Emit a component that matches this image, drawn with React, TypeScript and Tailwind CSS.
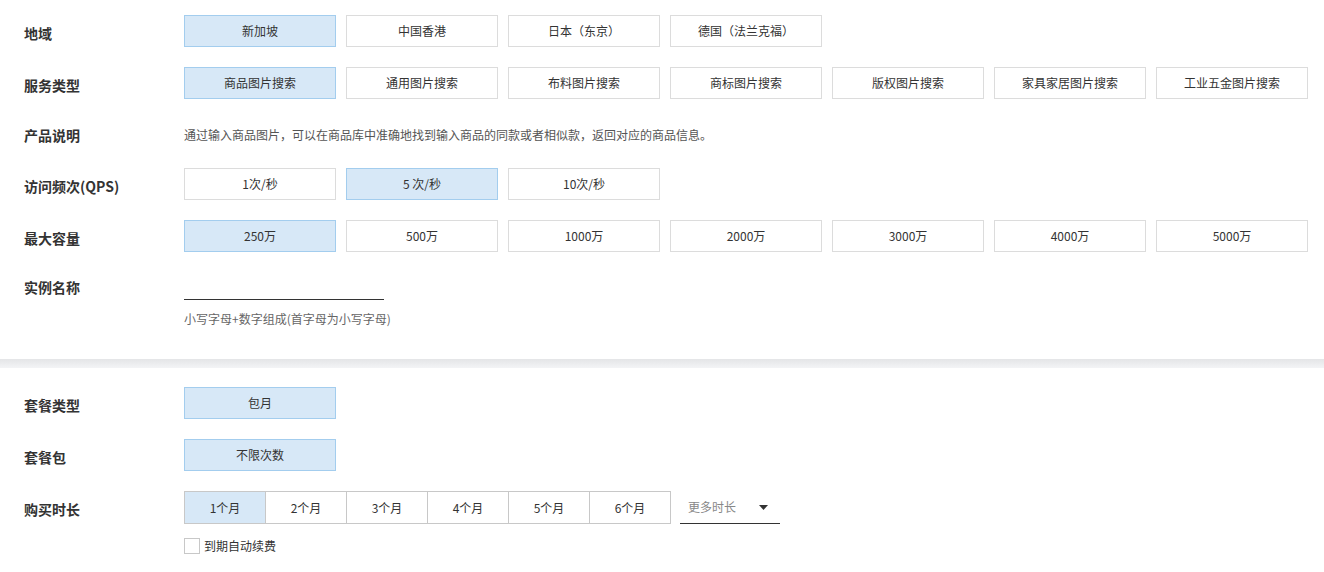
import { useState } from "react";

const font = { fontFamily: '"Noto Sans CJK SC", "Noto Sans", sans-serif' };

const Option = ({ label, active, onClick }: { label: string; active?: boolean; onClick?: () => void }) => (
  <button
    onClick={onClick}
    className={
      "w-[152px] h-8 border text-xs text-[#333] flex items-center justify-center cursor-pointer " +
      (active ? "bg-[#d7e8f7] border-[#a3cdee]" : "bg-white border-[#dcdcdc]")
    }
  >
    {label}
  </button>
);

const Row = ({ label, children, className = "" }: { label: string; children: React.ReactNode; className?: string }) => (
  <div className={"flex " + className}>
    <div className="w-[184px] pl-6 shrink-0 text-sm font-bold text-[#333] h-8 leading-8 pt-[2px]">{label}</div>
    <div className="flex-1">{children}</div>
  </div>
);

const Choice = ({ items, initial }: { items: string[]; initial: number }) => {
  const [sel, setSel] = useState(initial);
  return (
    <div className="flex gap-[10px]">
      {items.map((it, i) => (
        <Option key={it} label={it} active={sel === i} onClick={() => setSel(i)} />
      ))}
    </div>
  );
};

export default function App() {
  const [month, setMonth] = useState(0);
  const [renew, setRenew] = useState(false);
  const months = ["1个月", "2个月", "3个月", "4个月", "5个月", "6个月"];

  return (
    <div className="w-[1324px] bg-white" style={font}>
      {/* spec section */}
      <div className="pt-[15px] pb-[32px] flex flex-col gap-5">
        <Row label="地域">
          <Choice items={["新加坡", "中国香港", "日本（东京）", "德国（法兰克福）"]} initial={0} />
        </Row>
        <Row label="服务类型">
          <Choice
            items={["商品图片搜索", "通用图片搜索", "布料图片搜索", "商标图片搜索", "版权图片搜索", "家具家居图片搜索", "工业五金图片搜索"]}
            initial={0}
          />
        </Row>
        <div className="flex h-[29px]">
          <div className="w-[184px] pl-6 shrink-0 text-sm font-bold text-[#333] leading-[32px]">产品说明</div>
          <p className="text-xs text-[#555] leading-[32px]">
            通过输入商品图片，可以在商品库中准确地找到输入商品的同款或者相似款，返回对应的商品信息。
          </p>
        </div>
        <Row label="访问频次(QPS)">
          <Choice items={["1次/秒", "5 次/秒", "10次/秒"]} initial={1} />
        </Row>
        <Row label="最大容量">
          <Choice items={["250万", "500万", "1000万", "2000万", "3000万", "4000万", "5000万"]} initial={0} />
        </Row>
        <div className="flex">
          <div className="w-[184px] pl-6 shrink-0 text-sm font-bold text-[#333] leading-[32px] -mt-[1px]">实例名称</div>
          <div>
            <input className="w-[200px] h-7 border-b border-[#333] outline-none text-xs text-[#333] bg-transparent" />
            <p className="text-xs text-[#666] mt-[11px]">小写字母+数字组成(首字母为小写字母)</p>
          </div>
        </div>
      </div>

      <div className="h-[9px] bg-gradient-to-b from-[#e4e5e7] to-[#f3f4f6]" />

      {/* package section */}
      <div className="pt-[19px] pb-4 flex flex-col gap-5">
        <Row label="套餐类型">
          <Option label="包月" active />
        </Row>
        <Row label="套餐包">
          <Option label="不限次数" active />
        </Row>
        <Row label="购买时长">
          <div className="flex items-center">
            <div className="flex border border-[#c8c8c8]">
              {months.map((m, i) => (
                <button
                  key={m}
                  onClick={() => setMonth(i)}
                  className={
                    "h-[31px] text-xs text-[#333] cursor-pointer " +
                    (i > 0 ? "w-[81px] border-l border-[#c8c8c8] " : "w-[80px] ") +
                    (month === i ? "bg-[#d7e8f7]" : "bg-white")
                  }
                >
                  {m}
                </button>
              ))}
            </div>
            <div className="ml-[9px] w-[100px] h-[33px] border-b border-[#333] flex items-center justify-between pl-2 pr-3 text-xs text-[#888]">
              <span>更多时长</span>
              <svg width="9" height="5" viewBox="0 0 9 5">
                <path d="M0 0h9L4.5 5z" fill="#333" />
              </svg>
            </div>
          </div>
          <label className="flex items-center gap-[4px] mt-[14px] cursor-pointer">
            <input type="checkbox" checked={renew} onChange={() => setRenew(!renew)} className="sr-only" />
            <span className="w-4 h-4 border border-[#c8c8c8] bg-white flex items-center justify-center">
              {renew && (
                <svg width="10" height="8" viewBox="0 0 10 8">
                  <path d="M1 4l3 3 5-6" stroke="#333" strokeWidth="1.5" fill="none" />
                </svg>
              )}
            </span>
            <span className="text-xs text-[#333]">到期自动续费</span>
          </label>
        </Row>
      </div>
    </div>
  );
}
